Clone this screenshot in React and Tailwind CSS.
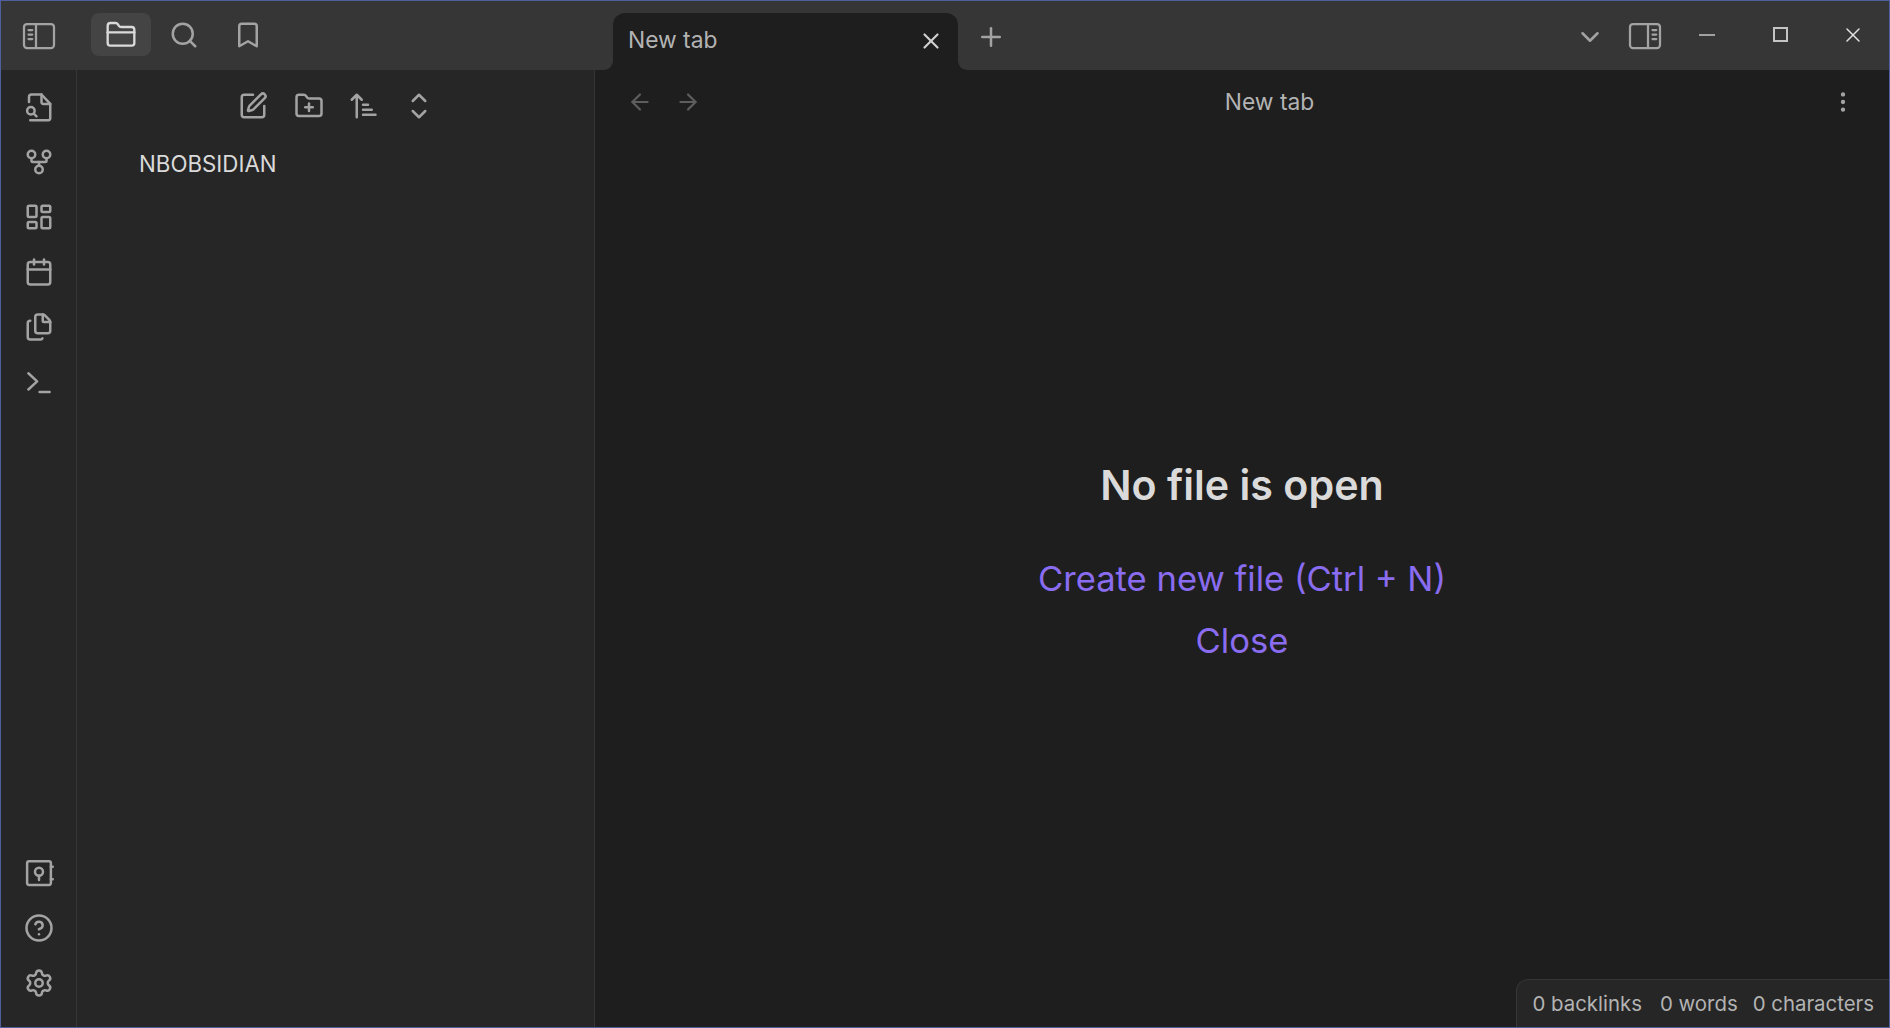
import React from "react";
import {
  ArrowLeft,
  ArrowRight,
  Bookmark,
  Calendar,
  ChevronDown,
  CircleHelp,
  Files,
  FolderClosed,
  FolderPlus,
  GitFork,
  LayoutDashboard,
  MoreVertical,
  Plus,
  Search,
  Settings,
  SquarePen,
  X,
} from "lucide-react";

const stroke = {
  fill: "none",
  stroke: "currentColor",
  strokeWidth: 2,
  strokeLinecap: "round",
  strokeLinejoin: "round",
};

const SidebarLeftIcon = () => (
  <svg width="36" height="36" viewBox="0 0 24 24" {...stroke} strokeWidth="1.5">
    <rect x="2" y="4" width="20" height="16" rx="2" />
    <path d="M10 4v16M5 8h2.5M5 11h2.5M5 14h2.5" />
  </svg>
);

const SidebarRightIcon = () => (
  <svg width="36" height="36" viewBox="0 0 24 24" {...stroke} strokeWidth="1.5">
    <rect x="2" y="4" width="20" height="16" rx="2" />
    <path d="M14 4v16M17 8h2.5M17 11h2.5M17 14h2.5" />
  </svg>
);

const FileSearchIcon = () => (
  <svg width="30" height="30" viewBox="0 0 24 24" {...stroke}>
    <path d="M4 8V4a2 2 0 0 1 2-2h8l7 7.500V21a1.500 1.500 0 0 1-1.500 1.500H5" />
    <path d="M14 2v6a1.500 1.500 0 0 0 1.500 1.500H21" />
    <circle cx="5.500" cy="15" r="3" />
    <path d="m8 17.500 2 2" />
  </svg>
);

const SortIcon = () => (
  <svg width="30" height="30" viewBox="0 0 24 24" {...stroke}>
    <path d="M3 7l4-4 4 4M7 3v18" />
    <path d="M12 11h4M12 15h7M12 19h10" />
  </svg>
);

const ExpandIcon = () => (
  <svg width="30" height="30" viewBox="0 0 24 24" {...stroke}>
    <path d="m7 8 5-5 5 5M7 16l5 5 5-5" />
  </svg>
);

const VaultIcon = () => (
  <svg width="30" height="30" viewBox="0 0 24 24" {...stroke}>
    <rect x="2.500" y="2.500" width="19" height="19" rx="1.500" />
    <path d="M21.500 7H23M21.500 17H23" />
    <circle cx="12" cy="11" r="3.200" />
    <path d="M12 14.200V17.500" />
  </svg>
);

const TerminalIcon = () => (
  <svg width="30" height="30" viewBox="0 0 24 24" {...stroke}>
    <path d="m3.500 5 7 6.500-7 6.500M12.500 20h8" />
  </svg>
);

const MinimizeIcon = () => (
  <svg width="16" height="2" viewBox="0 0 16 2">
    <path d="M0 1h16" stroke="currentColor" strokeWidth="1.500" />
  </svg>
);

const MaximizeIcon = () => <div className="w-[15px] h-[15px] border-2 border-[#c4c4c4]" />;

// the small inward curve where the tab meets the title bar
const TabCorner = ({ side }) =>
  side === "left" ? (
    <div className="absolute bottom-0 -left-[9px] w-[9px] h-[9px] bg-[#1e1e1e]">
      <div className="w-full h-full bg-[#363636] rounded-br-[9px]" />
    </div>
  ) : (
    <div className="absolute bottom-0 -right-[9px] w-[9px] h-[9px] bg-[#1e1e1e]">
      <div className="w-full h-full bg-[#363636] rounded-bl-[9px]" />
    </div>
  );

const ribbonTop = [
  <FileSearchIcon key="file" />,
  <GitFork key="graph" size={30} strokeWidth={2} />,
  <LayoutDashboard key="canvas" size={30} strokeWidth={2} />,
  <Calendar key="calendar" size={30} strokeWidth={2} />,
  <Files key="files" size={30} strokeWidth={2} />,
  <TerminalIcon key="terminal" />,
];

const ribbonBottom = [
  <VaultIcon key="vault" />,
  <CircleHelp key="help" size={30} strokeWidth={2} />,
  <Settings key="settings" size={30} strokeWidth={2} />,
];

const App = () => {
  return (
    <div
      className="w-[1890px] h-[1028px] flex flex-col overflow-hidden border-[1px] border-[#4e5f9e] bg-[#1e1e1e]"
      style={{ fontFamily: "Inter, sans-serif" }}
    >
      {/* title bar */}
      <div className="h-[69px] shrink-0 flex bg-[#363636] text-[#a3a3a3]">
        <div className="w-[612px] shrink-0 flex pt-3">
          <div className="w-[76px] h-[46px] flex items-center justify-center">
            <SidebarLeftIcon />
          </div>
          <div className="w-[60px] h-[43px] ml-[14px] rounded-lg bg-[#444444] flex items-center justify-center text-[#dadada]">
            <FolderClosed size={32} strokeWidth={1.75} />
          </div>
          <div className="w-[64px] h-[43px] ml-[1px] flex items-center justify-center">
            <Search size={30} strokeWidth={2} />
          </div>
          <div className="w-[64px] h-[43px] flex items-center justify-center">
            <Bookmark size={30} strokeWidth={2} />
          </div>
        </div>
        <div className="relative w-[345px] h-[57px] mt-3 shrink-0 rounded-t-xl bg-[#1e1e1e] flex items-center justify-between pl-[15px] pr-[14px] pb-[2px] text-[22.8px] text-[#b3b3b3]">
          <span>New tab</span>
          <X size={26} strokeWidth={2} className="text-[#cfcfcf]" />
          <TabCorner side="left" />
          <TabCorner side="right" />
        </div>
        <div className="ml-[18px] mt-[21px] h-[30px]">
          <Plus size={30} strokeWidth={2} />
        </div>
        <div className="flex-1 flex justify-end pt-3">
          <div className="w-[30px] h-[46px] flex items-center justify-center mt-[1px]">
            <ChevronDown size={30} strokeWidth={2} />
          </div>
          <div className="w-[36px] h-[46px] ml-[22px] flex items-center justify-center">
            <SidebarRightIcon />
          </div>
          <div className="w-[72px] ml-[8px] h-[44px] flex items-center justify-center text-[#c4c4c4]">
            <MinimizeIcon />
          </div>
          <div className="w-[74px] h-[43px] flex items-center justify-center">
            <MaximizeIcon />
          </div>
          <div className="w-[72px] h-[44px] flex items-center justify-center text-[#e0e0e0]">
            <X size={24} strokeWidth={1.5} />
          </div>
        </div>
      </div>

      <div className="flex-1 flex min-h-0">
        {/* ribbon */}
        <div className="w-[76px] shrink-0 flex flex-col justify-between bg-[#262626] border-r border-[#363636] text-[#a3a3a3] pt-[22px] pb-[29px]">
          <div className="flex flex-col items-center gap-[25px]">{ribbonTop}</div>
          <div className="flex flex-col items-center gap-[25px]">{ribbonBottom}</div>
        </div>

        {/* file explorer */}
        <div className="w-[518px] shrink-0 bg-[#262626] border-r border-[#363636]">
          <div className="flex justify-center gap-[25px] pt-[21px] pl-[1px] text-[#a3a3a3]">
            <SquarePen size={30} strokeWidth={2} />
            <FolderPlus size={30} strokeWidth={2} className="ml-[1px]" />
            <div className="-ml-[1px]">
              <SortIcon />
            </div>
            <div className="ml-[1px]">
              <ExpandIcon />
            </div>
          </div>
          <div className="mt-[28px] ml-[62px] text-[22.3px] leading-[30px] text-[#dadada]">NBOBSIDIAN</div>
        </div>

        {/* main pane */}
        <div className="flex-1 relative flex flex-col bg-[#1e1e1e]">
          <div className="h-[66px] shrink-0 flex items-center pl-[32px] pr-[33px] pb-[2px] text-[#5e5e5e]">
            <ArrowLeft size={26} strokeWidth={2} />
            <ArrowRight size={26} strokeWidth={2} className="ml-[22px]" />
            <div className="flex-1 ml-[8px] text-center text-[22.8px] text-[#b3b3b3]">New tab</div>
            <MoreVertical size={26} strokeWidth={2} className="text-[#a3a3a3]" />
          </div>
          <div className="flex-1 flex flex-col items-center justify-center pb-[42px]">
            <div className="text-[41.2px] leading-[60px] font-semibold text-[#dadada]">No file is open</div>
            <div className="mt-[37px] text-[34.6px] leading-[52px] text-[#8a6cf0]">Create new file (Ctrl + N)</div>
            <div className="mt-[10px] text-[34.6px] leading-[52px] text-[#8a6cf0]">Close</div>
          </div>
          <div className="absolute right-0 bottom-0 h-[48px] flex items-center gap-[18px] pl-[15px] pr-[15px] pt-[1px] rounded-tl-xl bg-[#262626] border-t border-l border-[#363636] text-[20.4px] text-[#b3b3b3]">
            <span>0 backlinks</span>
            <span>0 words</span>
            <span className="-ml-[3px]">0 characters</span>
          </div>
        </div>
      </div>
    </div>
  );
};

export default App;
